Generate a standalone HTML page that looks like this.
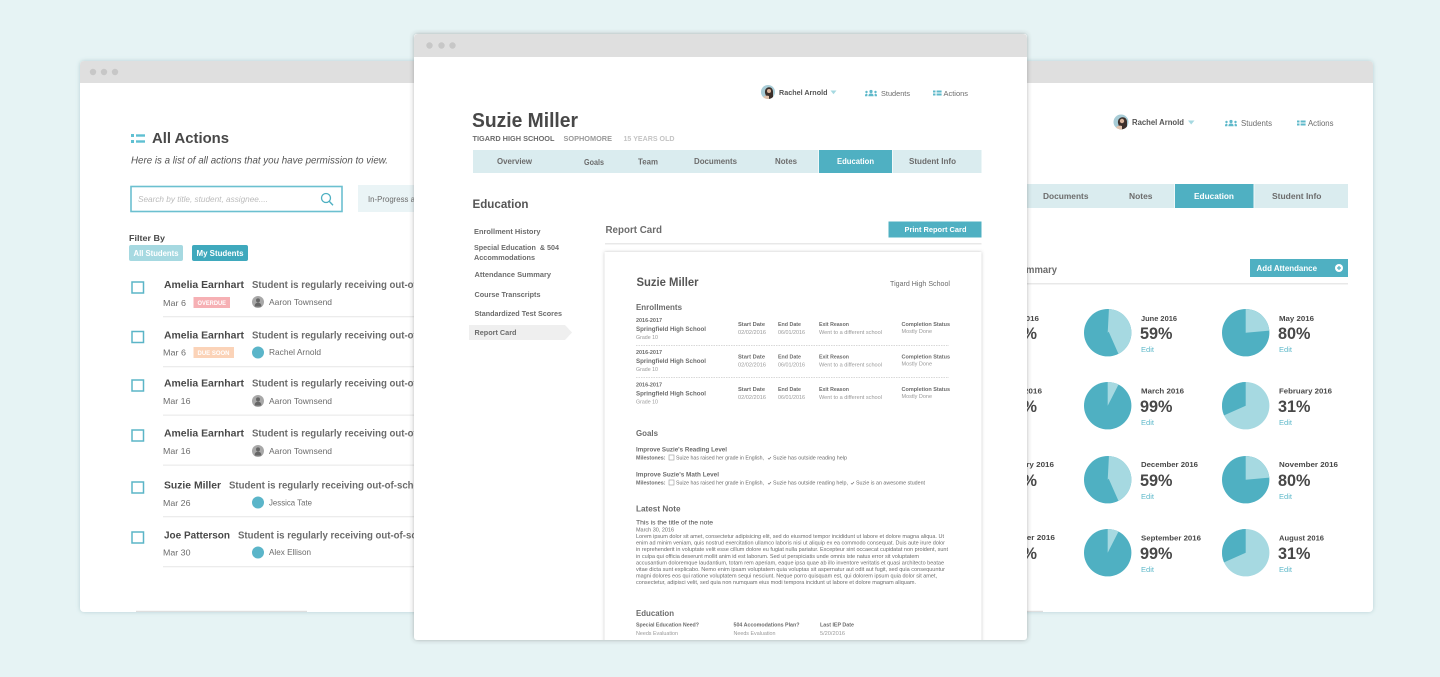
<!DOCTYPE html>
<html lang="en">
<head>
<meta charset="utf-8">
<title>Student Dashboard Screens</title>
<style>
html,body{margin:0;padding:0;width:1440px;height:677px;overflow:hidden;background:#e6f3f4}
svg{display:block;filter:blur(.3px)}
text{font-family:"Liberation Sans",sans-serif;fill:#555;white-space:pre}
.b{font-weight:700}
.i{font-style:italic}
.d{fill:#484848}
.g{fill:#6c6c6c}
.l{fill:#999}
.w{fill:#fff}
.t{fill:#5fb9ca}
.s5{font-size:5.4px}
.s6{font-size:6px}
.s65{font-size:6.5px}
.s7{font-size:7px}
.s75{font-size:7.5px}
.s8{font-size:8px}
.s85{font-size:8.5px}
.s9{font-size:9px}
.s10{font-size:10px}
.s11{font-size:11px}
.s12{font-size:12px}
.s16{font-size:16.5px}
</style>
</head>
<body>
<svg width="1440" height="677" viewBox="0 0 1440 677" xmlns="http://www.w3.org/2000/svg">
<defs>
<filter id="sh" x="-5%" y="-5%" width="110%" height="110%"><feDropShadow dx="0" dy="0" stdDeviation="2" flood-color="#7aa5ad" flood-opacity=".45"/></filter>
<filter id="sh2" x="-5%" y="-5%" width="110%" height="110%"><feDropShadow dx="0" dy="0" stdDeviation="2.5" flood-color="#444" flood-opacity=".4"/></filter>
<filter id="sh3" x="-5%" y="-5%" width="110%" height="110%"><feDropShadow dx="0" dy="0" stdDeviation="1.5" flood-color="#555" flood-opacity=".35"/></filter>
<clipPath id="ctop"><path d="M414 57V38a4 4 0 0 1 4-4H1023a4 4 0 0 1 4 4V57Z"/></clipPath>
<clipPath id="cpaper"><rect x="598" y="246" width="392" height="394"/></clipPath>
<clipPath id="cav1"><circle cx="768" cy="92" r="7"/></clipPath>
<clipPath id="cav2"><circle cx="1121" cy="122" r="7.5"/></clipPath>
<g id="p59"><circle r="23.7" fill="#4fb0c2"/><path d="M0 0L1.24-23.67A23.7 23.7 0 0 1 10.76 21.12L1 -1Z" fill="#a6d9e1"/></g>
<g id="p80"><circle r="23.7" fill="#4fb0c2"/><path d="M0 0L0-23.7A23.7 23.7 0 0 1 23.6-2.07Z" fill="#a6d9e1"/></g>
<g id="p99"><circle r="23.7" fill="#4fb0c2"/><path d="M0 0L0-23.7A23.7 23.7 0 0 1 10.76-21.12Z" fill="#a6d9e1"/></g>
<g id="p31"><circle r="23.7" fill="#a6d9e1"/><path d="M0 0L-21.65 9.64A23.7 23.7 0 0 1 0-23.7Z" fill="#4fb0c2"/></g>
<g id="gav"><circle r="6" fill="#a8a8a8"/><circle cy="-1.6" r="2" fill="#666"/><path d="M-3.4 4.6C-3.4 1.5-1.6.6 0 .6S3.4 1.5 3.4 4.6Z" fill="#666"/></g>
<g id="students" fill="#5fb9ca"><circle cx="6" cy="1.5" r="1.6"/><path d="M3.4 6.2C3.4 4 4.6 3.5 6 3.5S8.6 4 8.6 6.2Z"/><circle cx="1.5" cy="2" r="1.2"/><path d="M0 6.2C0 4.4.5 3.8 1.6 3.8L2.5 4.2 2.3 6.2Z"/><circle cx="10.5" cy="2" r="1.2"/><path d="M12 6.2C12 4.4 11.5 3.8 10.4 3.8L9.5 4.2 9.7 6.2Z"/></g>
<g id="listi" fill="#5fb9ca"><rect width="2.5" height="2"/><rect x="3.6" width="5" height="2"/><rect y="3" width="2.5" height="2"/><rect x="3.6" y="3" width="5" height="2"/></g>
</defs>

<rect width="1440" height="677" fill="#e6f3f4"/>

<!-- LEFT WINDOW -->
<g filter="url(#sh)"><rect x="80" y="61" width="400" height="551" rx="4" fill="#fff"/></g>
<path d="M80 83V65a4 4 0 0 1 4-4H480V83Z" fill="#dfdfdf"/>
<circle cx="93" cy="72" r="3.2" fill="#c7c7c7"/><circle cx="104" cy="72" r="3.2" fill="#c7c7c7"/><circle cx="115" cy="72" r="3.2" fill="#c7c7c7"/>
<rect x="136" y="610.800" width="171" height="1.200" fill="#dedede"/>

<g fill="#5fc0d2"><rect x="131" y="134" width="3" height="3"/><rect x="136" y="134.3" width="9" height="2.4"/><rect x="131" y="140" width="3" height="3"/><rect x="136" y="140.3" width="9" height="2.4"/></g>
<text x="152" y="143" textLength="77" lengthAdjust="spacingAndGlyphs" class="b d" font-size="15">All Actions</text>
<text x="131" y="163.5" textLength="257" lengthAdjust="spacingAndGlyphs" class="i" font-size="10.5">Here is a list of all actions that you have permission to view.</text>
<rect x="131" y="186.5" width="211" height="25" fill="#fff" stroke="#6cc0d0" stroke-width="1.6"/>
<text x="138" y="202" textLength="130" lengthAdjust="spacingAndGlyphs" class="i s85" style="fill:#bbb">Search by title, student, assignee....</text>
<circle cx="326" cy="198" r="4.5" fill="none" stroke="#4fb0c2" stroke-width="1.3"/><path d="M329.3 201.4L333 205.2" stroke="#4fb0c2" stroke-width="1.4" fill="none"/>
<rect x="358" y="185" width="80" height="27" fill="#eaf4f6"/>
<text x="368" y="202" textLength="47" lengthAdjust="spacingAndGlyphs" class="s85 g">In-Progress a</text>
<text x="129" y="241" textLength="36" lengthAdjust="spacingAndGlyphs" class="b s85 d">Filter By</text>
<rect x="129" y="245" width="54" height="16" rx="2" fill="#a6d9e1"/>
<text x="133.500" y="256" textLength="45" lengthAdjust="spacingAndGlyphs" class="b s8 w">All Students</text>
<rect x="192" y="245" width="56" height="16" rx="2" fill="#3fa9bd"/>
<text x="196.500" y="256" textLength="47" lengthAdjust="spacingAndGlyphs" class="b s8 w">My Students</text>

<g fill="#fff" stroke="#5bb5c7" stroke-width="1.5">
<rect x="132" y="282" width="11.500" height="11"/>
<rect x="132" y="331.500" width="11.500" height="11"/>
<rect x="132" y="380" width="11.500" height="11"/>
<rect x="132" y="430" width="11.500" height="11"/>
<rect x="132" y="482" width="11.500" height="11"/>
<rect x="132" y="532" width="11.500" height="11"/>
</g>
<g fill="#ececec">
<rect x="163" y="316" width="260" height="1.300"/>
<rect x="163" y="366" width="260" height="1.300"/>
<rect x="163" y="414.500" width="260" height="1.300"/>
<rect x="163" y="464.500" width="260" height="1.300"/>
<rect x="163" y="516" width="260" height="1.300"/>
<rect x="163" y="566" width="260" height="1.300"/>
</g>

<text x="164" y="288" textLength="80" lengthAdjust="spacingAndGlyphs" class="b s10 d">Amelia Earnhart</text>
<text x="252" y="288" textLength="199" lengthAdjust="spacingAndGlyphs" class="s10 b g">Student is regularly receiving out-of-school</text>
<text x="163" y="306" textLength="23" lengthAdjust="spacingAndGlyphs" class="s85 g">Mar 6</text>
<rect x="193.500" y="297" width="36.500" height="11" fill="#f6b0b4"/>
<text x="197.500" y="305" textLength="28.500" lengthAdjust="spacingAndGlyphs" class="b s6 w">OVERDUE</text>
<use href="#gav" x="258" y="302"/>
<text x="269" y="305" textLength="63" lengthAdjust="spacingAndGlyphs" class="s85 g">Aaron Townsend</text>

<text x="164" y="338.500" textLength="80" lengthAdjust="spacingAndGlyphs" class="b s10 d">Amelia Earnhart</text>
<text x="252" y="338.500" textLength="199" lengthAdjust="spacingAndGlyphs" class="s10 b g">Student is regularly receiving out-of-school</text>
<text x="163" y="355.500" textLength="23" lengthAdjust="spacingAndGlyphs" class="s85 g">Mar 6</text>
<rect x="193.500" y="347" width="40.500" height="11" fill="#fbd3b8"/>
<text x="197.500" y="355" textLength="32" lengthAdjust="spacingAndGlyphs" class="b s6 w">DUE SOON</text>
<circle cx="258" cy="352.500" r="6" fill="#5bb5c9"/>
<text x="269" y="355" textLength="52" lengthAdjust="spacingAndGlyphs" class="s85 g">Rachel Arnold</text>

<text x="164" y="386.500" textLength="80" lengthAdjust="spacingAndGlyphs" class="b s10 d">Amelia Earnhart</text>
<text x="252" y="386.500" textLength="199" lengthAdjust="spacingAndGlyphs" class="s10 b g">Student is regularly receiving out-of-school</text>
<text x="163" y="404" textLength="27.500" lengthAdjust="spacingAndGlyphs" class="s85 g">Mar 16</text>
<use href="#gav" x="258" y="401"/>
<text x="269" y="404" textLength="63" lengthAdjust="spacingAndGlyphs" class="s85 g">Aaron Townsend</text>

<text x="164" y="436.500" textLength="80" lengthAdjust="spacingAndGlyphs" class="b s10 d">Amelia Earnhart</text>
<text x="252" y="436.500" textLength="199" lengthAdjust="spacingAndGlyphs" class="s10 b g">Student is regularly receiving out-of-school</text>
<text x="163" y="454" textLength="27.500" lengthAdjust="spacingAndGlyphs" class="s85 g">Mar 16</text>
<use href="#gav" x="258" y="451"/>
<text x="269" y="454" textLength="63" lengthAdjust="spacingAndGlyphs" class="s85 g">Aaron Townsend</text>

<text x="164" y="488.500" textLength="57" lengthAdjust="spacingAndGlyphs" class="b s10 d">Suzie Miller</text>
<text x="229" y="488.500" textLength="199" lengthAdjust="spacingAndGlyphs" class="s10 b g">Student is regularly receiving out-of-school</text>
<text x="163" y="506" textLength="27.500" lengthAdjust="spacingAndGlyphs" class="s85 g">Mar 26</text>
<circle cx="258" cy="502.500" r="6" fill="#5bb5c9"/>
<text x="269" y="505.500" textLength="43" lengthAdjust="spacingAndGlyphs" class="s85 g">Jessica Tate</text>

<text x="164" y="538.500" textLength="66" lengthAdjust="spacingAndGlyphs" class="b s10 d">Joe Patterson</text>
<text x="238" y="538.500" textLength="199" lengthAdjust="spacingAndGlyphs" class="s10 b g">Student is regularly receiving out-of-school</text>
<text x="163" y="555.500" textLength="27.500" lengthAdjust="spacingAndGlyphs" class="s85 g">Mar 30</text>
<circle cx="258" cy="552.500" r="6" fill="#5bb5c9"/>
<text x="269" y="555" textLength="42" lengthAdjust="spacingAndGlyphs" class="s85 g">Alex Ellison</text>

<!-- RIGHT WINDOW -->
<g filter="url(#sh)"><rect x="960" y="61" width="413" height="551" rx="4" fill="#fff"/></g>
<path d="M960 83V61H1369a4 4 0 0 1 4 4V83Z" fill="#dfdfdf"/>
<rect x="1027" y="610.800" width="16" height="1.200" fill="#dedede"/>

<g clip-path="url(#cav2)"><rect x="1113" y="114" width="16" height="16" fill="#a8ccd6"/><path d="M1118 123C1117 116 1127 115 1127 122L1127 130H1120Z" fill="#3c2f2a"/><circle cx="1122" cy="121" r="2.200" fill="#d9b39a"/><path d="M1115 130C1116 126 1119 125 1122 126L1122 130Z" fill="#e2c3ad"/></g>
<text x="1132" y="125" textLength="52" lengthAdjust="spacingAndGlyphs" class="b s8">Rachel Arnold</text>
<path d="M1188 120.500H1194.500L1191.200 124.500Z" fill="#a6d9e1"/>
<use href="#students" x="1225" y="120"/>
<text x="1241" y="126" textLength="31" lengthAdjust="spacingAndGlyphs" class="s8 g">Students</text>
<use href="#listi" x="1297" y="120.500"/>
<text x="1308" y="126" textLength="25.500" lengthAdjust="spacingAndGlyphs" class="s8 g">Actions</text>

<rect x="1000" y="184" width="348" height="24" fill="#daecef"/>
<rect x="1175" y="184" width="78.500" height="24" fill="#4fb0c2"/>
<rect x="1174" y="184" width="1" height="24" fill="#f0f8f9"/><rect x="1253.500" y="184" width="1" height="24" fill="#f0f8f9"/>
<text x="1043" y="199" textLength="45.500" lengthAdjust="spacingAndGlyphs" class="b s85 g">Documents</text>
<text x="1129" y="199" textLength="23.500" lengthAdjust="spacingAndGlyphs" class="b s85 g">Notes</text>
<text x="1194" y="199" textLength="40" lengthAdjust="spacingAndGlyphs" class="b s85 w">Education</text>
<text x="1272" y="199" textLength="49.500" lengthAdjust="spacingAndGlyphs" class="b s85 g">Student Info</text>

<text x="960" y="273" textLength="97" lengthAdjust="spacingAndGlyphs" class="b s10 g">Attendance Summary</text>
<rect x="1000" y="283" width="348" height="1.500" fill="#e8e8e8"/>
<rect x="1250" y="259" width="98" height="18" fill="#4fb0c2"/>
<text x="1256.500" y="271" textLength="60.500" lengthAdjust="spacingAndGlyphs" class="b s8 w">Add Attendance</text>
<circle cx="1339" cy="268" r="4" fill="#fff"/><path d="M1337 268H1341M1339 266V270" stroke="#4fb0c2" stroke-width="1.200"/>

<use href="#p59" x="1107.700" y="332.700"/><use href="#p80" x="1245.700" y="332.700"/>
<use href="#p99" x="1107.700" y="405.700"/><use href="#p31" x="1245.700" y="405.700"/>
<use href="#p59" x="1107.700" y="479.700"/><use href="#p80" x="1245.700" y="479.700"/>
<use href="#p99" x="1107.700" y="552.700"/><use href="#p31" x="1245.700" y="552.700"/>

<text x="1003" y="321" textLength="36" lengthAdjust="spacingAndGlyphs" class="b s75 d">July 2016</text>
<text x="1005" y="339" textLength="32" lengthAdjust="spacingAndGlyphs" class="b s16 d">80%</text>
<text x="1003" y="393.500" textLength="39" lengthAdjust="spacingAndGlyphs" class="b s75 d">April 2016</text>
<text x="1005" y="412" textLength="32" lengthAdjust="spacingAndGlyphs" class="b s16 d">31%</text>
<text x="1003" y="467" textLength="51" lengthAdjust="spacingAndGlyphs" class="b s75 d">January 2016</text>
<text x="1005" y="486" textLength="32" lengthAdjust="spacingAndGlyphs" class="b s16 d">80%</text>
<text x="1003" y="540" textLength="52" lengthAdjust="spacingAndGlyphs" class="b s75 d">October 2016</text>
<text x="1005" y="559" textLength="32" lengthAdjust="spacingAndGlyphs" class="b s16 d">31%</text>

<text x="1141" y="321" textLength="36" lengthAdjust="spacingAndGlyphs" class="b s75 d">June 2016</text>
<text x="1140" y="339" textLength="32.500" lengthAdjust="spacingAndGlyphs" class="b s16 d">59%</text>
<text x="1141" y="352" textLength="13" lengthAdjust="spacingAndGlyphs" class="s75 t">Edit</text>
<text x="1279" y="321" textLength="35" lengthAdjust="spacingAndGlyphs" class="b s75 d">May 2016</text>
<text x="1278" y="339" textLength="32.500" lengthAdjust="spacingAndGlyphs" class="b s16 d">80%</text>
<text x="1279" y="352" textLength="13" lengthAdjust="spacingAndGlyphs" class="s75 t">Edit</text>

<text x="1141" y="393.500" textLength="43" lengthAdjust="spacingAndGlyphs" class="b s75 d">March 2016</text>
<text x="1140" y="412" textLength="32.500" lengthAdjust="spacingAndGlyphs" class="b s16 d">99%</text>
<text x="1141" y="425" textLength="13" lengthAdjust="spacingAndGlyphs" class="s75 t">Edit</text>
<text x="1279" y="393.500" textLength="53" lengthAdjust="spacingAndGlyphs" class="b s75 d">February 2016</text>
<text x="1278" y="412" textLength="32.500" lengthAdjust="spacingAndGlyphs" class="b s16 d">31%</text>
<text x="1279" y="425" textLength="13" lengthAdjust="spacingAndGlyphs" class="s75 t">Edit</text>

<text x="1141" y="467" textLength="57" lengthAdjust="spacingAndGlyphs" class="b s75 d">December 2016</text>
<text x="1140" y="486" textLength="32.500" lengthAdjust="spacingAndGlyphs" class="b s16 d">59%</text>
<text x="1141" y="499" textLength="13" lengthAdjust="spacingAndGlyphs" class="s75 t">Edit</text>
<text x="1279" y="467" textLength="59" lengthAdjust="spacingAndGlyphs" class="b s75 d">November 2016</text>
<text x="1278" y="486" textLength="32.500" lengthAdjust="spacingAndGlyphs" class="b s16 d">80%</text>
<text x="1279" y="499" textLength="13" lengthAdjust="spacingAndGlyphs" class="s75 t">Edit</text>

<text x="1141" y="540.500" textLength="60" lengthAdjust="spacingAndGlyphs" class="b s75 d">September 2016</text>
<text x="1140" y="559" textLength="32.500" lengthAdjust="spacingAndGlyphs" class="b s16 d">99%</text>
<text x="1141" y="572" textLength="13" lengthAdjust="spacingAndGlyphs" class="s75 t">Edit</text>
<text x="1279" y="540.500" textLength="45" lengthAdjust="spacingAndGlyphs" class="b s75 d">August 2016</text>
<text x="1278" y="559" textLength="32.500" lengthAdjust="spacingAndGlyphs" class="b s16 d">31%</text>
<text x="1279" y="572" textLength="13" lengthAdjust="spacingAndGlyphs" class="s75 t">Edit</text>

<!-- CENTRE WINDOW -->
<g filter="url(#sh2)"><rect x="414" y="34" width="613" height="606" rx="3" fill="#fff"/></g>
<rect x="414" y="34" width="613" height="23" fill="#dfdfdf" clip-path="url(#ctop)"/>
<circle cx="429.500" cy="45.500" r="3.200" fill="#c7c7c7"/><circle cx="441.500" cy="45.500" r="3.200" fill="#c7c7c7"/><circle cx="452.500" cy="45.500" r="3.200" fill="#c7c7c7"/>

<g clip-path="url(#cav1)"><rect x="761" y="85" width="14" height="14" fill="#a8ccd6"/><path d="M765 93C764 86 773 85 773 92L773 99H767Z" fill="#3c2f2a"/><circle cx="769" cy="91" r="2" fill="#d9b39a"/><path d="M762 99C763 96 766 95 769 96L769 99Z" fill="#e2c3ad"/></g>
<text x="779" y="95" textLength="48.500" lengthAdjust="spacingAndGlyphs" class="b s75">Rachel Arnold</text>
<path d="M830.500 90.500H836.500L833.500 94.300Z" fill="#a6d9e1"/>
<use href="#students" x="865" y="90"/>
<text x="881" y="96" textLength="29" lengthAdjust="spacingAndGlyphs" class="s75 g">Students</text>
<use href="#listi" x="933" y="90.500"/>
<text x="943.500" y="96" textLength="24.500" lengthAdjust="spacingAndGlyphs" class="s75 g">Actions</text>

<text x="472" y="127" textLength="106" lengthAdjust="spacingAndGlyphs" class="b d" font-size="20.500">Suzie Miller</text>
<text x="472.500" y="141" textLength="82" lengthAdjust="spacingAndGlyphs" class="b s75 g">TIGARD HIGH SCHOOL</text>
<text x="563.500" y="141" textLength="48.500" lengthAdjust="spacingAndGlyphs" class="b s75 l">SOPHOMORE</text>
<text x="623.500" y="141" textLength="51" lengthAdjust="spacingAndGlyphs" class="b s75" style="fill:#c4c4c4">15 YEARS OLD</text>

<rect x="473" y="150" width="508.500" height="23" fill="#daecef"/>
<rect x="819" y="150" width="73" height="23" fill="#4fb0c2"/>
<rect x="818" y="150" width="1" height="23" fill="#f0f8f9"/><rect x="892" y="150" width="1" height="23" fill="#f0f8f9"/>
<text x="497" y="164" textLength="35" lengthAdjust="spacingAndGlyphs" class="b s8 g">Overview</text>
<text x="584" y="165" textLength="20" lengthAdjust="spacingAndGlyphs" class="b s8 g">Goals</text>
<text x="638" y="164.500" textLength="20" lengthAdjust="spacingAndGlyphs" class="b s8 g">Team</text>
<text x="694" y="164" textLength="43" lengthAdjust="spacingAndGlyphs" class="b s8 g">Documents</text>
<text x="775" y="164" textLength="22" lengthAdjust="spacingAndGlyphs" class="b s8 g">Notes</text>
<text x="837" y="164" textLength="37" lengthAdjust="spacingAndGlyphs" class="b s8 w">Education</text>
<text x="909" y="164" textLength="47" lengthAdjust="spacingAndGlyphs" class="b s8 g">Student Info</text>

<text x="472.500" y="208" textLength="56" lengthAdjust="spacingAndGlyphs" class="b s12">Education</text>

<path d="M469 325H565L572 332.500 565 340H469Z" fill="#efefef"/>
<text x="474" y="234" textLength="66.500" lengthAdjust="spacingAndGlyphs" class="b s75 g">Enrollment History</text>
<text x="474" y="250" textLength="85" lengthAdjust="spacingAndGlyphs" class="b s75 g">Special Education  &amp; 504</text>
<text x="474" y="260" textLength="61" lengthAdjust="spacingAndGlyphs" class="b s75 g">Accommodations</text>
<text x="474.500" y="277" textLength="76.500" lengthAdjust="spacingAndGlyphs" class="b s75 g">Attendance Summary</text>
<text x="474.500" y="297" textLength="66" lengthAdjust="spacingAndGlyphs" class="b s75 g">Course Transcripts</text>
<text x="474.500" y="316" textLength="87.500" lengthAdjust="spacingAndGlyphs" class="b s75 g">Standardized Test Scores</text>
<text x="474.500" y="335" textLength="42" lengthAdjust="spacingAndGlyphs" class="b s75 g">Report Card</text>

<text x="605.500" y="233" textLength="56.500" lengthAdjust="spacingAndGlyphs" class="b s10 g">Report Card</text>
<rect x="605" y="243" width="376.500" height="1.500" fill="#e8e8e8"/>
<rect x="888.500" y="221.500" width="93" height="16" fill="#4fb0c2"/>
<text x="904.500" y="232" textLength="62" lengthAdjust="spacingAndGlyphs" class="b s75 w">Print Report Card</text>

<g clip-path="url(#cpaper)"><g filter="url(#sh3)"><rect x="604.500" y="252" width="377" height="395" fill="#fff"/></g></g>

<text x="636.500" y="286" textLength="62" lengthAdjust="spacingAndGlyphs" class="b s12">Suzie Miller</text>
<text x="890" y="286" textLength="60" lengthAdjust="spacingAndGlyphs" class="s75 g">Tigard High School</text>
<text x="636" y="310" textLength="46" lengthAdjust="spacingAndGlyphs" class="b s85 g">Enrollments</text>

<text x="636" y="322" textLength="26" lengthAdjust="spacingAndGlyphs" class="b s5 g">2016-2017</text>
<text x="636" y="331" textLength="70" lengthAdjust="spacingAndGlyphs" class="b s65 g">Springfield High School</text>
<text x="636" y="339" textLength="22" lengthAdjust="spacingAndGlyphs" class="s5 l">Grade 10</text>
<text x="738" y="326" textLength="27" lengthAdjust="spacingAndGlyphs" class="b s5 g">Start Date</text>
<text x="738" y="334" textLength="28" lengthAdjust="spacingAndGlyphs" class="s5 l">02/02/2016</text>
<text x="778" y="326" textLength="23" lengthAdjust="spacingAndGlyphs" class="b s5 g">End Date</text>
<text x="778" y="334" textLength="27" lengthAdjust="spacingAndGlyphs" class="s5 l">06/01/2016</text>
<text x="819" y="326" textLength="30" lengthAdjust="spacingAndGlyphs" class="b s5 g">Exit Reason</text>
<text x="819" y="334" textLength="63" lengthAdjust="spacingAndGlyphs" class="s5 l">Went to a different school</text>
<text x="901.500" y="326" textLength="48.500" lengthAdjust="spacingAndGlyphs" class="b s5 g">Completion Status</text>
<text x="901.500" y="333" textLength="30.500" lengthAdjust="spacingAndGlyphs" class="s5 l">Mostly Done</text>
<path d="M636 345.500H949" stroke="#ccc" stroke-width=".7" stroke-dasharray="1.500 1" fill="none"/>

<text x="636" y="354" textLength="26" lengthAdjust="spacingAndGlyphs" class="b s5 g">2016-2017</text>
<text x="636" y="363" textLength="70" lengthAdjust="spacingAndGlyphs" class="b s65 g">Springfield High School</text>
<text x="636" y="371" textLength="22" lengthAdjust="spacingAndGlyphs" class="s5 l">Grade 10</text>
<text x="738" y="358.500" textLength="27" lengthAdjust="spacingAndGlyphs" class="b s5 g">Start Date</text>
<text x="738" y="366.500" textLength="28" lengthAdjust="spacingAndGlyphs" class="s5 l">02/02/2016</text>
<text x="778" y="358.500" textLength="23" lengthAdjust="spacingAndGlyphs" class="b s5 g">End Date</text>
<text x="778" y="366.500" textLength="27" lengthAdjust="spacingAndGlyphs" class="s5 l">06/01/2016</text>
<text x="819" y="358.500" textLength="30" lengthAdjust="spacingAndGlyphs" class="b s5 g">Exit Reason</text>
<text x="819" y="366.500" textLength="63" lengthAdjust="spacingAndGlyphs" class="s5 l">Went to a different school</text>
<text x="901.500" y="358.500" textLength="48.500" lengthAdjust="spacingAndGlyphs" class="b s5 g">Completion Status</text>
<text x="901.500" y="365.500" textLength="30.500" lengthAdjust="spacingAndGlyphs" class="s5 l">Mostly Done</text>
<path d="M636 377.500H949" stroke="#ccc" stroke-width=".7" stroke-dasharray="1.500 1" fill="none"/>

<text x="636" y="386.500" textLength="26" lengthAdjust="spacingAndGlyphs" class="b s5 g">2016-2017</text>
<text x="636" y="395.500" textLength="70" lengthAdjust="spacingAndGlyphs" class="b s65 g">Springfield High School</text>
<text x="636" y="403.500" textLength="22" lengthAdjust="spacingAndGlyphs" class="s5 l">Grade 10</text>
<text x="738" y="391" textLength="27" lengthAdjust="spacingAndGlyphs" class="b s5 g">Start Date</text>
<text x="738" y="399" textLength="28" lengthAdjust="spacingAndGlyphs" class="s5 l">02/02/2016</text>
<text x="778" y="391" textLength="23" lengthAdjust="spacingAndGlyphs" class="b s5 g">End Date</text>
<text x="778" y="399" textLength="27" lengthAdjust="spacingAndGlyphs" class="s5 l">06/01/2016</text>
<text x="819" y="391" textLength="30" lengthAdjust="spacingAndGlyphs" class="b s5 g">Exit Reason</text>
<text x="819" y="399" textLength="63" lengthAdjust="spacingAndGlyphs" class="s5 l">Went to a different school</text>
<text x="901.500" y="391" textLength="48.500" lengthAdjust="spacingAndGlyphs" class="b s5 g">Completion Status</text>
<text x="901.500" y="398" textLength="30.500" lengthAdjust="spacingAndGlyphs" class="s5 l">Mostly Done</text>

<text x="636" y="436" textLength="22" lengthAdjust="spacingAndGlyphs" class="b s85 g">Goals</text>
<text x="636" y="451.500" textLength="91" lengthAdjust="spacingAndGlyphs" class="b s6 g">Improve Suzie's Reading Level</text>
<text x="636" y="459.500" textLength="29.500" lengthAdjust="spacingAndGlyphs" class="b s5 g">Milestones:</text>
<rect x="669" y="455" width="5" height="5" fill="none" stroke="#999" stroke-width=".6"/>
<text x="676" y="459.500" textLength="88" lengthAdjust="spacingAndGlyphs" class="s5 g">Suize has raised her grade in English,</text>
<path d="M768 458L769 459.300 771 457" stroke="#666" stroke-width=".6" fill="none"/>
<text x="773" y="459.500" textLength="74" lengthAdjust="spacingAndGlyphs" class="s5 g">Suzie has outside reading help</text>

<text x="636" y="476.500" textLength="83" lengthAdjust="spacingAndGlyphs" class="b s6 g">Improve Suzie's Math Level</text>
<text x="636" y="484.500" textLength="29.500" lengthAdjust="spacingAndGlyphs" class="b s5 g">Milestones:</text>
<rect x="669" y="480" width="5" height="5" fill="none" stroke="#999" stroke-width=".6"/>
<text x="676" y="484.500" textLength="88" lengthAdjust="spacingAndGlyphs" class="s5 g">Suize has raised her grade in English,</text>
<path d="M768 483L769 484.300 771 482" stroke="#666" stroke-width=".6" fill="none"/>
<text x="773" y="484.500" textLength="75" lengthAdjust="spacingAndGlyphs" class="s5 g">Suzie has outside reading help,</text>
<path d="M851 483L852 484.300 854 482" stroke="#666" stroke-width=".6" fill="none"/>
<text x="856" y="484.500" textLength="69" lengthAdjust="spacingAndGlyphs" class="s5 g">Suzie is an awesome student</text>

<text x="636" y="511.500" textLength="44.500" lengthAdjust="spacingAndGlyphs" class="b s85 g">Latest Note</text>
<text x="636" y="524.500" textLength="77" lengthAdjust="spacingAndGlyphs" class="s65 d">This is the title of the note</text>
<text x="636" y="531.500" textLength="38" lengthAdjust="spacingAndGlyphs" class="s5 g">March 30, 2016</text>
<text x="636" y="538" textLength="308" lengthAdjust="spacingAndGlyphs" class="s5 g">Lorem ipsum dolor sit amet, consectetur adipisicing elit, sed do eiusmod tempor incididunt ut labore et dolore magna aliqua. Ut</text>
<text x="636" y="544.600" textLength="309" lengthAdjust="spacingAndGlyphs" class="s5 g">enim ad minim veniam, quis nostrud exercitation ullamco laboris nisi ut aliquip ex ea commodo consequat. Duis aute irure dolor</text>
<text x="636" y="551.200" textLength="312" lengthAdjust="spacingAndGlyphs" class="s5 g">in reprehenderit in voluptate velit esse cillum dolore eu fugiat nulla pariatur. Excepteur sint occaecat cupidatat non proident, sunt</text>
<text x="636" y="557.800" textLength="283" lengthAdjust="spacingAndGlyphs" class="s5 g">in culpa qui officia deserunt mollit anim id est laborum. Sed ut perspiciatis unde omnis iste natus error sit voluptatem</text>
<text x="636" y="564.400" textLength="308" lengthAdjust="spacingAndGlyphs" class="s5 g">accusantium doloremque laudantium, totam rem aperiam, eaque ipsa quae ab illo inventore veritatis et quasi architecto beatae</text>
<text x="636" y="571" textLength="309" lengthAdjust="spacingAndGlyphs" class="s5 g">vitae dicta sunt explicabo. Nemo enim ipsam voluptatem quia voluptas sit aspernatur aut odit aut fugit, sed quia consequuntur</text>
<text x="636" y="577.600" textLength="301" lengthAdjust="spacingAndGlyphs" class="s5 g">magni dolores eos qui ratione voluptatem sequi nesciunt. Neque porro quisquam est, qui dolorem ipsum quia dolor sit amet,</text>
<text x="636" y="584.200" textLength="280" lengthAdjust="spacingAndGlyphs" class="s5 g">consectetur, adipisci velit, sed quia non numquam eius modi tempora incidunt ut labore et dolore magnam aliquam.</text>

<text x="636" y="616" textLength="38" lengthAdjust="spacingAndGlyphs" class="b s85 g">Education</text>
<text x="636" y="626.500" textLength="63" lengthAdjust="spacingAndGlyphs" class="b s5 g">Special Education Need?</text>
<text x="733.500" y="626.500" textLength="66" lengthAdjust="spacingAndGlyphs" class="b s5 g">504 Accomodations Plan?</text>
<text x="820" y="626.500" textLength="34" lengthAdjust="spacingAndGlyphs" class="b s5 g">Last IEP Date</text>
<text x="636" y="635" textLength="42" lengthAdjust="spacingAndGlyphs" class="s5 l">Needs Evaluation</text>
<text x="733.500" y="635" textLength="42" lengthAdjust="spacingAndGlyphs" class="s5 l">Needs Evaluation</text>
<text x="820" y="635" textLength="25" lengthAdjust="spacingAndGlyphs" class="s5 l">5/20/2016</text>
</svg>
</body>
</html>
